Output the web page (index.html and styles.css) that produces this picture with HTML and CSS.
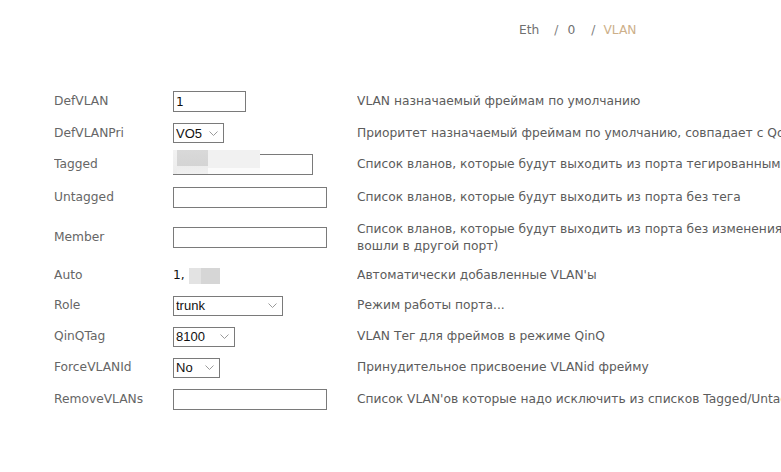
FILE: index.html
```html
<!DOCTYPE html>
<html lang="ru">
<head>
<meta charset="utf-8">
<title>VLAN</title>
<link rel="stylesheet" href="styles.css">
</head>
<body>
<nav class="crumbs">
  <span class="crumb">Eth</span>
  <span class="sep">/</span>
  <span class="crumb">0</span>
  <span class="sep sep-last">/</span>
  <span class="crumb current">VLAN</span>
</nav>

<table class="form">
  <colgroup>
    <col class="c-label">
    <col class="c-ctl">
    <col class="c-desc">
  </colgroup>
  <tr class="r-inp">
    <td class="label">DefVLAN</td>
    <td class="ctl"><input class="inp inp-short" type="text" value="1"></td>
    <td class="desc">VLAN назначаемый фреймам по умолчанию</td>
  </tr>
  <tr class="r-sel-top">
    <td class="label">DefVLANPri</td>
    <td class="ctl">
      <span class="sel sel-pri"><select><option>VO5</option></select><svg class="chev" width="9" height="5" viewBox="0 0 9 5"><path d="M0.5 0.5 L4.5 4.5 L8.5 0.5" fill="none" stroke="#9a9a9a" stroke-width="1"/></svg></span>
    </td>
    <td class="desc">Приоритет назначаемый фреймам по умолчанию, совпадает с QoS-приоритетом</td>
  </tr>
  <tr class="r-inp">
    <td class="label">Tagged</td>
    <td class="ctl">
      <span class="masked">
        <input class="inp inp-tagged" type="text" value="">
        <span class="blur"><span class="b1"></span><span class="b2"></span><span class="b3"></span></span>
      </span>
    </td>
    <td class="desc">Список вланов, которые будут выходить из порта тегированными</td>
  </tr>
  <tr class="r-inp">
    <td class="label">Untagged</td>
    <td class="ctl"><input class="inp inp-long" type="text" value=""></td>
    <td class="desc">Список вланов, которые будут выходить из порта без тега</td>
  </tr>
  <tr class="r-two">
    <td class="label">Member</td>
    <td class="ctl"><input class="inp inp-long" type="text" value=""></td>
    <td class="desc">Список вланов, которые будут выходить из порта без изменения (в том виде, в котором они<br>вошли в другой порт)</td>
  </tr>
  <tr class="r-txt">
    <td class="label">Auto</td>
    <td class="ctl"><span class="auto">1,<span class="hide"><span class="h1"></span><span class="h2"></span></span></span></td>
    <td class="desc">Автоматически добавленные VLAN'ы</td>
  </tr>
  <tr class="r-sel">
    <td class="label">Role</td>
    <td class="ctl">
      <span class="sel sel-role"><select><option>trunk</option></select><svg class="chev" width="9" height="5" viewBox="0 0 9 5"><path d="M0.5 0.5 L4.5 4.5 L8.5 0.5" fill="none" stroke="#9a9a9a" stroke-width="1"/></svg></span>
    </td>
    <td class="desc">Режим работы порта...</td>
  </tr>
  <tr class="r-sel">
    <td class="label">QinQTag</td>
    <td class="ctl">
      <span class="sel sel-qinq"><select><option>8100</option></select><svg class="chev" width="9" height="5" viewBox="0 0 9 5"><path d="M0.5 0.5 L4.5 4.5 L8.5 0.5" fill="none" stroke="#9a9a9a" stroke-width="1"/></svg></span>
    </td>
    <td class="desc">VLAN Тег для фреймов в режиме QinQ</td>
  </tr>
  <tr class="r-sel">
    <td class="label">ForceVLANId</td>
    <td class="ctl">
      <span class="sel sel-force"><select><option>No</option></select><svg class="chev" width="9" height="5" viewBox="0 0 9 5"><path d="M0.5 0.5 L4.5 4.5 L8.5 0.5" fill="none" stroke="#9a9a9a" stroke-width="1"/></svg></span>
    </td>
    <td class="desc">Принудительное присвоение VLANid фрейму</td>
  </tr>
  <tr class="r-inp">
    <td class="label">RemoveVLANs</td>
    <td class="ctl"><input class="inp inp-long" type="text" value=""></td>
    <td class="desc">Список VLAN'ов которые надо исключить из списков Tagged/Untagged</td>
  </tr>
</table>
</body>
</html>
```

FILE: styles.css
```css
html {
  overflow: hidden;
  background: #fff;
}

body {
  margin: 0;
  font-family: "DejaVu Sans", Verdana, sans-serif;
  font-size: 12.25px;
  line-height: 17px;
  color: #5a5a5a;
}

.crumbs {
  display: flex;
  align-items: center;
  height: 17px;
  padding: 22px 0 0 519px;
  color: #707070;
  white-space: nowrap;
}

.sep {
  margin: 0 9px 0 15px;
  color: #808080;
}

.sep-last {
  margin: 0 8px 0 16px;
}

.current {
  color: #cdb08a;
}

.form {
  table-layout: fixed;
  width: 1000px;
  margin: 46px 0 0 54px;
  border-collapse: collapse;
  white-space: nowrap;
}

.c-label { width: 119px; }
.c-ctl { width: 184px; }
.c-desc { width: 697px; }

.form td {
  padding: 0;
  vertical-align: middle;
  overflow: hidden;
}

.r-inp td { height: 33px; }
.r-sel-top td { height: 30px; }
.r-sel td { height: 31px; }
.r-txt td { height: 29px; }
.r-two td { height: 47px; }

.label {
  color: #666;
}

.ctl {
  color: #222;
}

.desc {
  color: #5c5c5c;
}

.inp {
  box-sizing: border-box;
  height: 21px;
  margin: 0;
  padding: 0 2px;
  border: 1px solid #7a7a7a;
  background: #fff;
  font-family: "DejaVu Sans", Verdana, sans-serif;
  font-size: 12.25px;
  color: #111;
  outline: none;
  display: block;
}

.inp-short { width: 73px; }
.inp-tagged { width: 140px; }
.inp-long { width: 154px; }

.masked {
  position: relative;
  display: block;
  width: 140px;
}

.blur {
  position: absolute;
  left: -13px;
  top: -4px;
  width: 100px;
  height: 24px;
  display: flex;
}

.blur .b1 {
  width: 17px;
  background: linear-gradient(#f2f2f2, #ececec);
}

.blur .b2 {
  width: 31px;
  background: linear-gradient(#d9d9d9 0, #d4d4d4 65%, #ececec 65%, #f0f0f0 100%);
}

.blur .b3 {
  width: 52px;
  background: linear-gradient(#f1f1f1 0, #f1f1f1 75%, #fbfbfb 75%);
}

.sel {
  box-sizing: border-box;
  display: flex;
  align-items: center;
  height: 20px;
  border: 1px solid #7a7a7a;
  background: #fff;
}

.sel select {
  flex: 1;
  min-width: 0;
  height: 18px;
  margin: 0;
  padding: 0 0 0 2px;
  border: 0;
  background: transparent;
  -webkit-appearance: none;
  appearance: none;
  font-family: "Liberation Sans", Arial, sans-serif;
  font-size: 13px;
  color: #111;
  outline: none;
}

.chev {
  flex: none;
  margin-right: 5px;
}

.sel-pri { width: 51px; }
.sel-role { width: 110px; }
.sel-qinq { width: 62px; }
.sel-force { width: 47px; }

.auto {
  display: flex;
  align-items: center;
  height: 17px;
  color: #111;
}

.hide {
  display: inline-flex;
  height: 16px;
  margin-left: 4px;
}

.hide .h1 {
  width: 12px;
  background: #e3e3e3;
}

.hide .h2 {
  width: 19px;
  background: #d6d6d6;
}
```
